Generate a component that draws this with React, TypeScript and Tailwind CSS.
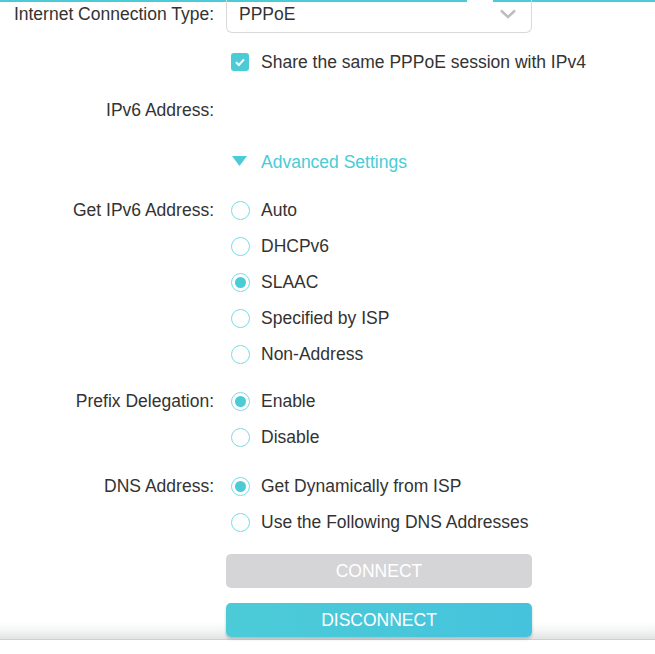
import React from "react";

const TEAL = "#4acbd6";

function Radio({ checked, label }: { checked?: boolean; label: string }) {
  return (
    <div className="flex h-[36px] items-center whitespace-nowrap">
      <span className="ml-[5px] flex h-[19px] w-[19px] shrink-0 items-center justify-center rounded-full border-[1.5px] border-[#7fd9e1] bg-white">
        {checked && <span className="h-[11px] w-[11px] rounded-full bg-[#4acbd6]" />}
      </span>
      <span className="ml-[11px] text-[#333]">{label}</span>
    </div>
  );
}

function Row({
  label,
  children,
  className = "",
}: {
  label?: string;
  children: React.ReactNode;
  className?: string;
}) {
  return (
    <div className={`flex ${className}`}>
      <div className="flex h-[36px] w-[214px] shrink-0 items-center justify-end whitespace-nowrap text-[#333]">
        {label}
      </div>
      <div className="ml-[12px] w-[306px]">{children}</div>
    </div>
  );
}

export default function App() {
  return (
    <div
      className="relative h-[654px] w-[655px] overflow-hidden bg-white text-[17.5px]"
      style={{ fontFamily: '"Liberation Sans", Arial, sans-serif' }}
    >
      <div className="flex h-[2px]">
        <div className="w-[467px] bg-[#4acbd6]" />
        <div className="w-[26px]" />
        <div className="flex-1 bg-[#4acbd6]" />
      </div>

      <div className="-mt-[2px]">
        <Row label="Internet Connection Type:" className="-mt-[6px]">
          <div className="flex h-[37px] items-center justify-between rounded-b-[6px] border border-t-0 border-[#d9d9d9] px-[12px]">
            <span className="text-[#333]">PPPoE</span>
            <svg width="18" height="12" viewBox="0 0 18 12" className="mr-[2px]">
              <path d="M2 2.5 L9 9 L16 2.5" fill="none" stroke="#bdbdbd" strokeWidth="2.4" />
            </svg>
          </div>
        </Row>

        <Row className="mt-[11px]">
          <div className="flex h-[36px] items-center whitespace-nowrap">
            <span className="ml-[5px] flex h-[18px] w-[18px] shrink-0 items-center justify-center rounded-[3px] bg-[#4acbd6]">
              <svg width="14" height="14" viewBox="0 0 14 14">
                <path d="M3 7.2 L5.9 10 L11 4.4" fill="none" stroke="#fff" strokeWidth="2" />
              </svg>
            </span>
            <span className="ml-[12px] text-[#333]">Share the same PPPoE session with IPv4</span>
          </div>
        </Row>

        <Row label="IPv6 Address:" className="mt-[12px]">
          <div />
        </Row>

        <Row className="mt-[16px]">
          <div className="flex h-[36px] items-center whitespace-nowrap">
            <svg width="16" height="12" viewBox="0 0 16 12" className="ml-[6px]">
              <path d="M0 0 H15 L7.5 10 Z" fill={TEAL} />
            </svg>
            <span className="ml-[13px] text-[#4acbd6]">Advanced Settings</span>
          </div>
        </Row>

        <Row label="Get IPv6 Address:" className="mt-[12px]">
          <Radio label="Auto" />
          <Radio label="DHCPv6" />
          <Radio label="SLAAC" checked />
          <Radio label="Specified by ISP" />
          <Radio label="Non-Address" />
        </Row>

        <Row label="Prefix Delegation:" className="mt-[11px]">
          <Radio label="Enable" checked />
          <Radio label="Disable" />
        </Row>

        <Row label="DNS Address:" className="mt-[13px]">
          <Radio label="Get Dynamically from ISP" checked />
          <Radio label="Use the Following DNS Addresses" />
        </Row>

        <div className="mt-[14px] flex">
          <div className="w-[226px]" />
          <button
            type="button"
            className="flex h-[34px] w-[306px] items-center justify-center rounded-[5px] bg-[#d5d5d7] text-white"
          >
            CONNECT
          </button>
        </div>
      </div>

      <div className="mt-[10px] h-[42px] border-b border-[#cfcfcf] bg-[linear-gradient(to_bottom,#ffffff_0px,#ffffff_24px,#f3f4f4_33px,#e2e3e3_41px)]">
        <div className="flex pt-[5px]">
          <div className="w-[226px]" />
          <button
            type="button"
            className="flex h-[34px] w-[306px] items-center justify-center rounded-[5px] bg-[linear-gradient(to_right,#4ccbd7,#45c3dd)] text-white shadow-[0_2px_3px_rgba(0,0,0,0.2)]"
          >
            DISCONNECT
          </button>
        </div>
      </div>
    </div>
  );
}
